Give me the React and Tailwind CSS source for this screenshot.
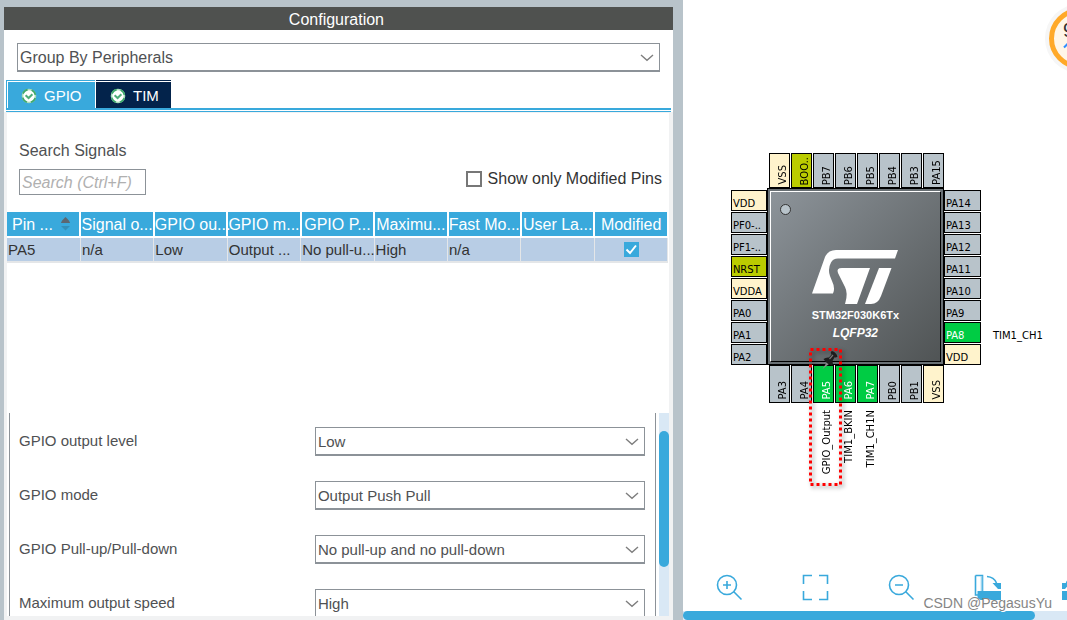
import React from "react";

const COLUMNS = [
  { title: "Pin ...", value: "PA5", sort: true },
  { title: "Signal o...", value: "n/a" },
  { title: "GPIO ou...", value: "Low" },
  { title: "GPIO m...", value: "Output ..." },
  { title: "GPIO P...", value: "No pull-u..." },
  { title: "Maximu...", value: "High" },
  { title: "Fast Mo...", value: "n/a" },
  { title: "User La...", value: "" },
  { title: "Modified", checked: true },
];

const FIELDS = [
  { id: "level", label: "GPIO output level", value: "Low" },
  { id: "mode", label: "GPIO mode", value: "Output Push Pull" },
  { id: "pull", label: "GPIO Pull-up/Pull-down", value: "No pull-up and no pull-down" },
  { id: "speed", label: "Maximum output speed", value: "High" },
];

const TONES = {
  io: "bg-[#b8c3ca] text-black",
  power: "bg-[#fff3cc] text-black",
  system: "bg-[#bbcc00] text-black",
  active: "bg-[#00cc44] text-white",
};

const TOP_PINS = [["VSS", "power"], ["BOO..", "system"], ["PB7", "io"], ["PB6", "io"], ["PB5", "io"], ["PB4", "io"], ["PB3", "io"], ["PA15", "io"]];
const LEFT_PINS = [["VDD", "power"], ["PF0-..", "io"], ["PF1-..", "io"], ["NRST", "system"], ["VDDA", "power"], ["PA0", "io"], ["PA1", "io"], ["PA2", "io"]];
const RIGHT_PINS = [["PA14", "io"], ["PA13", "io"], ["PA12", "io"], ["PA11", "io"], ["PA10", "io"], ["PA9", "io"], ["PA8", "active", "TIM1_CH1"], ["VDD", "power"]];
const BOTTOM_PINS = [["PA3", "io"], ["PA4", "io"], ["PA5", "active", "GPIO_Output"], ["PA6", "active", "TIM1_BKIN"], ["PA7", "active", "TIM1_CH1N"], ["PB0", "io"], ["PB1", "io"], ["VSS", "power"]];

function Dropdown({ id, value, label, size = "text-base" }) {
  return (
    <div className="relative">
      <select
        id={id}
        aria-label={label}
        defaultValue={value}
        className={"block h-[29px] w-full appearance-none border border-b-2 border-[#8c9298] bg-white pl-[2px] pr-8 pt-[2px] leading-6 text-[#4f5153] outline-none " + size}
      >
        <option>{value}</option>
      </select>
      <svg className="pointer-events-none absolute right-[6px] top-[11px]" width="14" height="8" viewBox="0 0 14 8" fill="none" stroke="#7e7e7e" strokeWidth="1.4" aria-hidden="true">
        <path d="M1 1 L7 6.2 L13 1" />
      </svg>
    </div>
  );
}

function TabCheck() {
  return (
    <svg width="16" height="16" viewBox="0 0 16 16" aria-hidden="true">
      <circle cx="8" cy="8" r="6.500" fill="#fff" stroke="#a9dcbc" strokeWidth="1.6" />
      <circle cx="8" cy="8" r="6.500" fill="none" stroke="#3fa86c" strokeWidth="1.6" strokeDasharray="6 4.200" strokeDashoffset="-2" />
      <path d="M4.600 7.200 L7.600 10 L11.400 6.200" fill="none" stroke="#4fae79" strokeWidth="2" />
    </svg>
  );
}

function SidePin({ pin }) {
  const [name, tone, signal] = pin;
  return (
    <div className={"relative flex h-[21px] shrink-0 items-end border border-black pl-px text-[10px] leading-3 " + TONES[tone]}>
      {name}
      {signal && <span className="absolute left-12 top-[7px] text-black">{signal}</span>}
    </div>
  );
}

function UprightPin({ pin }) {
  const [name, tone, signal] = pin;
  return (
    <div className={"relative flex w-[21px] shrink-0 items-end justify-end border border-black pb-[2px] text-[10px] leading-3 " + TONES[tone]}>
      <span className="rotate-180 [writing-mode:vertical-rl]">{name}</span>
      {signal && <span className="absolute right-0 top-11 rotate-180 text-black [writing-mode:vertical-rl]">{signal}</span>}
    </div>
  );
}

function StLogo() {
  return (
    <svg width="86" height="55" viewBox="0 0 86 55" fill="#fff" aria-label="ST">
      <path d="M86 0 H24 Q16 0 13 7 L0 43.5 H21 Q23.5 38 20 31 L18 26 Q15.500 19 19 12.500 Q21 8.500 26 8.500 H83 Z" />
      <path d="M58 18 H30 Q24 18 26 23 L33 37 Q36 43 33.500 52 L33 54 H45 Z" />
      <path d="M67 18 H79.500 L69 46 Q66 54 59 54 H53 Z" />
    </svg>
  );
}

function Chip() {
  return (
    <div className="relative grid grid-cols-[36px_177px_37px] grid-rows-[35px_177px_38px] font-['DejaVu_Sans',sans-serif]">
      <div className="col-start-2 row-start-1 flex gap-px pl-[2px]">
        {TOP_PINS.map((p, i) => <UprightPin key={i} pin={p} />)}
      </div>
      <div className="col-start-1 row-start-2 flex flex-col gap-px pt-[2px]">
        {LEFT_PINS.map((p, i) => <SidePin key={i} pin={p} />)}
      </div>
      <div className="col-start-2 row-start-2 border border-black bg-[#697074] p-[2px]">
        <div className="flex h-full flex-col items-center border border-b-black border-l-white border-r-black border-t-white bg-linear-to-br from-[#8d949a] to-[#505455] font-['Liberation_Sans',sans-serif] font-bold text-white">
          <span className="ml-[9px] mt-3 size-[11px] self-start rounded-full border border-[#333] bg-[#b8c3ca]" />
          <div className="mt-[35px]"><StLogo /></div>
          <p className="mt-[2px] text-[11px] leading-4">STM32F030K6Tx</p>
          <p className="text-xs italic leading-5">LQFP32</p>
        </div>
      </div>
      <div className="col-start-3 row-start-2 flex flex-col gap-px pt-[2px]">
        {RIGHT_PINS.map((p, i) => <SidePin key={i} pin={p} />)}
      </div>
      <div className="col-start-2 row-start-3 flex gap-px pl-[2px]">
        {BOTTOM_PINS.map((p, i) => <UprightPin key={i} pin={p} />)}
      </div>
      <svg className="absolute left-[78px] top-[195px] drop-shadow-[2px_2px_2px_rgba(0,0,0,0.45)]" width="34" height="140" viewBox="0 0 34 140" fill="none" aria-hidden="true">
        <rect x="1.500" y="1.500" width="30" height="135" stroke="#f00" strokeWidth="3" strokeDasharray="3 3" />
      </svg>
      <svg className="absolute left-[90px] top-[197px]" width="20" height="22" viewBox="0 0 20 22" aria-hidden="true">
        <path d="M1.500 19 L6 12 L8 14 Z" fill="#8b8b8b" />
        <path d="M2.500 9 Q5 7 8 7.500 L10.500 4.500 Q9 2 11 1 Q15 2 16.500 6.500 Q15 8 13.500 7.200 L11.500 11 Q12.500 14 11 15.500 Q5.500 14 2.500 9 Z" fill="#1d1d1d" />
        <path d="M8.500 9 L12 5" stroke="#777" strokeWidth="1.2" />
      </svg>
    </div>
  );
}

function ToolButton({ label, children }) {
  return (
    <button type="button" aria-label={label} className="block shrink-0">
      <svg width="27" height="27" viewBox="0 0 27 27" fill="none" stroke="#39a9dc" strokeWidth="1.6" aria-hidden="true">
        {children}
      </svg>
    </button>
  );
}

function RotateGlyph() {
  return (
    <>
      <path d="M1.500 1.500 H8.500 V17 M1.500 1.500 V21 H4" />
      <path d="M7.500 2 V17" stroke="#9bd3ee" />
      <path d="M3.500 17 H27 V26 H6 Q3.500 26 3.500 23 Z" fill="#39a9dc" stroke="none" />
      <path d="M13 2.500 Q20 3 22.500 9" />
      <path d="M18.500 9 H27 V15 H24 Z" fill="#39a9dc" stroke="none" />
    </>
  );
}

export default function App() {
  return (
    <main className="grid h-screen grid-cols-[64fr_36fr] overflow-hidden bg-white font-['Liberation_Sans',Arial,sans-serif] text-base leading-6 text-[#4f5153]">
      <section className="flex min-w-0 flex-col overflow-hidden bg-[#b8c3ca] pl-1 pr-[10px] pt-[7px]">
        <h1 className="h-[23px] shrink-0 bg-[#4f514f] pr-1 text-center leading-[25px] text-white">Configuration</h1>
        <div className="shrink-0 bg-white px-[13px] pt-[13px]">
          <Dropdown id="group" label="Grouping" value="Group By Peripherals" />
        </div>
        <div className="shrink-0 bg-white pl-[2px] pr-[2px] pt-2">
          <div role="tablist" className="flex h-7 gap-px text-[15px]">
            <button type="button" role="tab" aria-selected="true" className="flex w-[89px] items-center gap-[7px] border-l border-t border-[#39a9dc] bg-[#39a9dc] pl-[14px] pt-[2px] text-white shadow-[inset_1px_1px_0_#fff]">
              <TabCheck />GPIO
            </button>
            <button type="button" role="tab" aria-selected="false" className="flex w-[75px] items-center gap-[7px] border-t border-[#03234b] bg-[#03234b] pl-[14px] pt-[2px] text-white shadow-[inset_0_1px_0_#fff]">
              <TabCheck />TIM
            </button>
          </div>
          <div className="h-1 border-b border-t-2 border-[#39a9dc] bg-white" />
        </div>
        <div className="flex min-h-0 flex-1 flex-col border-b-4 border-l-[3px] border-r-4 border-t border-[#f1f2f3] bg-white">
          <div className="shrink-0 pl-3 pr-[7px] pt-[26px]">
            <label htmlFor="search" className="block">Search Signals</label>
            <div className="flex items-start justify-between pt-[6px]">
              <input id="search" type="text" placeholder="Search (Ctrl+F)" className="h-[26px] w-[127px] border border-[#8c9298] pl-[2px] pt-[2px] italic outline-none placeholder:text-[#b0b0b0]" />
              <label className="flex items-center gap-[6px] leading-5 text-[#333]">
                <input type="checkbox" className="size-4 appearance-none border-2 border-[#777] bg-white" />
                Show only Modified Pins
              </label>
            </div>
          </div>
          <div className="h-[218px] shrink-0 overflow-hidden pt-[17px]">
            <table className="w-full table-fixed border-collapse whitespace-nowrap">
              <thead>
                <tr className="h-[25px] text-white">
                  {COLUMNS.map((c) => (
                    <th key={c.title} className="border-b-2 border-r-2 border-white bg-[#39a9dc] p-0 text-center font-normal leading-[23px]">
                      {c.sort ? (
                        <span className="flex items-center justify-between pl-[5px] pr-2">
                          {c.title}
                          <svg width="11" height="14" viewBox="0 0 11 14" aria-hidden="true">
                            <path d="M1 6 Q1 4 5.500 0 Q10 4 10 6 Z" fill="#5d6770" />
                            <path d="M1 9 H10 L5.500 13.500 Z" fill="#348fb8" />
                          </svg>
                        </span>
                      ) : c.title}
                    </th>
                  ))}
                </tr>
              </thead>
              <tbody>
                <tr className="h-[25px] text-[15px] text-[#333]">
                  {COLUMNS.map((c) => (
                    <td key={c.title} className="border-b-2 border-r border-b-[#e4e6e8] border-r-[#e4e6e8] bg-[#b8cde5] p-0 pl-px leading-[23px]">
                      {c.checked ? (
                        <span className="flex items-center justify-center">
                          <input type="checkbox" defaultChecked aria-label="PA5 modified" className="size-[15px] appearance-none bg-[#39a9dc]" />
                          <svg className="pointer-events-none absolute" width="15" height="15" viewBox="0 0 15 15" fill="none" stroke="#fff" strokeWidth="2" aria-hidden="true">
                            <path d="M2.500 7.500 L6 11 L12 3.500" />
                          </svg>
                        </span>
                      ) : c.value}
                    </td>
                  ))}
                </tr>
              </tbody>
            </table>
          </div>
          <div className="flex min-h-0 flex-1 gap-[3px] pl-[2px] text-[15px]">
            <div className="min-w-0 flex-1 overflow-hidden border-l border-r border-[#8c9298] pl-[9px] pr-[10px] pt-[14px]">
              {FIELDS.map((f) => (
                <div key={f.id} className="grid h-[54px] grid-cols-[296fr_330fr] items-start">
                  <label htmlFor={f.id} className="pt-[2px]">{f.label}</label>
                  <Dropdown id={f.id} value={f.value} size="text-[15px]" />
                </div>
              ))}
            </div>
            <div className="w-[10px] shrink-0 bg-[#d9e8f5] pt-[18px]">
              <div className="h-[136px] rounded-full bg-[#39a9dc]" />
            </div>
          </div>
        </div>
      </section>

      <section className="relative flex min-w-0 flex-col overflow-hidden bg-white">
        <div className="min-h-0 flex-1 pl-12 pt-[153px]">
          <Chip />
        </div>
        <div className="flex shrink-0 gap-[59px] pb-[10px] pl-[33px]">
          <ToolButton label="Zoom in">
            <circle cx="11" cy="11" r="9.500" />
            <path d="M17.800 17.800 L25.500 25.500 M7 11 H15 M11 7 V15" />
          </ToolButton>
          <ToolButton label="Best fit">
            <path d="M1.500 10 V1.500 H10 M17 1.500 H25.500 V10 M25.500 17 V25.500 H17 M10 25.500 H1.500 V17" />
          </ToolButton>
          <ToolButton label="Zoom out">
            <circle cx="11" cy="11" r="9.500" />
            <path d="M17.800 17.800 L25.500 25.500 M7 11 H15" />
          </ToolButton>
          <ToolButton label="Rotate clockwise"><RotateGlyph /></ToolButton>
          <ToolButton label="Rotate counter-clockwise">
            <g transform="translate(29 0) scale(-1 1)"><RotateGlyph /></g>
          </ToolButton>
        </div>
        <div className="h-[9px] shrink-0 bg-[#d9e8f5]">
          <div className="h-full w-11/12 rounded-full bg-[#39a9dc]" />
        </div>
        <span className="absolute bottom-[7px] right-[15px] text-sm leading-5 text-[#858585] [text-shadow:1px_1px_0_#fff]">CSDN @PegasusYu</span>
        <div className="absolute -right-[43px] top-[8px] size-[61px] rounded-full border-[5px] border-[#ffa929] bg-[#fff6e8] pl-[9px] pt-[5px] shadow-[0_0_0_4px_#f6f6f6]">
          <span className="block text-xl leading-6 text-[#333]">9</span>
          <svg className="block" width="10" height="11" viewBox="0 0 10 11" fill="none" stroke="#2f8fff" strokeWidth="2" aria-hidden="true">
            <path d="M5 11 V2 M1 5.500 L5 1.500 L9 5.500" />
          </svg>
        </div>
      </section>
    </main>
  );
}
